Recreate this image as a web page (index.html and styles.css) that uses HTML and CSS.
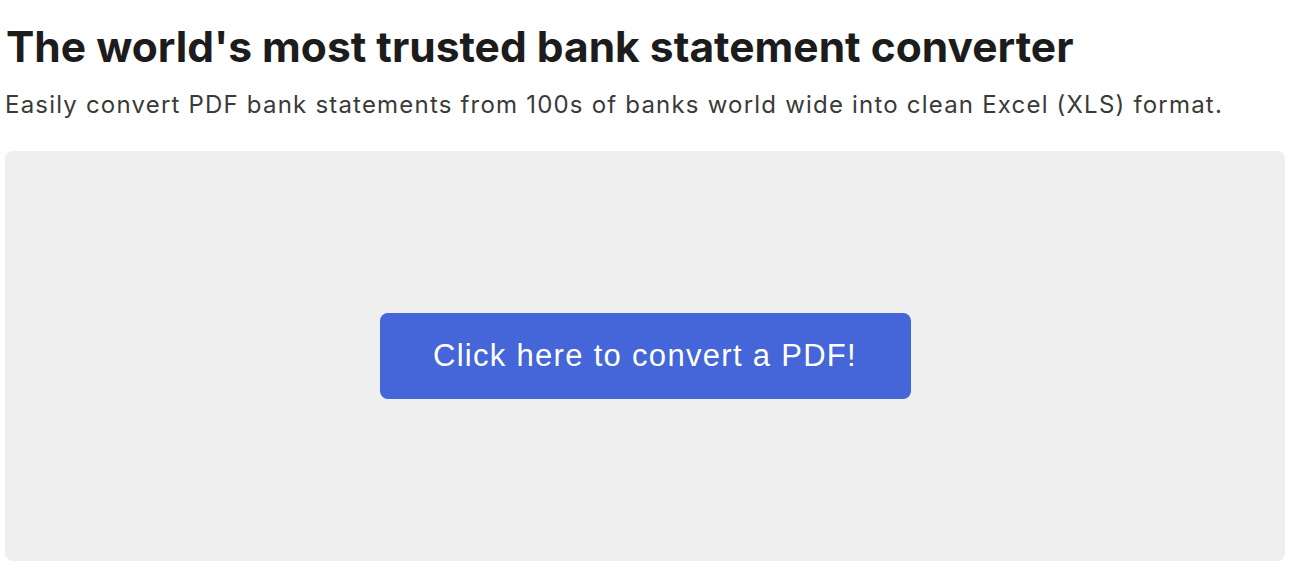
FILE: index.html
```html
<!DOCTYPE html>
<html>
<head>
<meta charset="utf-8">
<link rel="stylesheet" href="styles.css">
</head>
<body>
<main class="page">
  <h1 class="title">The world's most trusted bank statement converter</h1>
  <p class="subtitle">Easily convert PDF bank statements from 100s of banks world wide into clean Excel (XLS) format.</p>
  <section class="dropzone">
    <button class="convert-btn">Click here to convert a PDF!</button>
  </section>
</main>
</body>
</html>
```

FILE: styles.css
```css
html, body {
  margin: 0;
  padding: 0;
  background: #ffffff;
}
.page {
  padding: 0 7px 0 5px;
  display: flex;
  flex-direction: column;
}
.title {
  margin: 22px 0 0 1px;
  font-family: "Inter", sans-serif;
  font-weight: 700;
  font-size: 42.5px;
  line-height: 50px;
  color: #1c1c1c;
  white-space: nowrap;
}
.subtitle {
  margin: 18px 0 0 0;
  font-family: "Inter", sans-serif;
  font-weight: 400;
  font-size: 24px;
  letter-spacing: 1.2px;
  line-height: 30px;
  color: #3a3a3a;
  white-space: nowrap;
}
.dropzone {
  margin-top: 31px;
  height: 410px;
  background: #f0efef;
  border-radius: 8px;
  display: flex;
  align-items: center;
  justify-content: center;
}
.convert-btn {
  width: 531px;
  height: 86px;
  border: none;
  border-radius: 8px;
  background: #4466d8;
  color: #ffffff;
  font-family: "Liberation Sans", Arial, sans-serif;
  font-size: 31px;
  letter-spacing: 1.3px;
  cursor: pointer;
}
```
